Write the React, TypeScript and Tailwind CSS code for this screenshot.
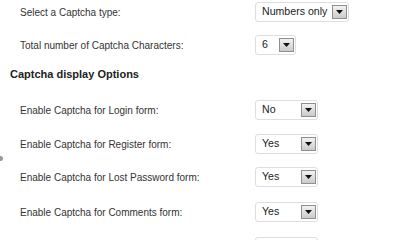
import React from "react";

function Arrow() {
  return (
    <span className="ml-auto mr-[1px] flex h-[14px] w-[15px] shrink-0 items-center justify-center border border-[#8f8f8f] bg-gradient-to-b from-[#f2f2f2] to-[#cbcbcb]">
      <svg width="7" height="4" viewBox="0 0 7 4">
        <path d="M0 0 H7 L3.5 4 Z" fill="#111" />
      </svg>
    </span>
  );
}

function Select({ value, width }: { value: string; width: string }) {
  return (
    <div
      className={`flex h-[20px] ${width} shrink-0 items-center rounded-[3px] border border-[#dedede] bg-white pl-[6px] text-[10.6px] text-[#222]`}
      style={{ fontFamily: '"Liberation Sans", Arial, sans-serif' }}
    >
      <span className="whitespace-nowrap">{value}</span>
      <Arrow />
    </div>
  );
}

function Row({ label, value, width, className = "" }: { label: string; value: string; width: string; className?: string }) {
  return (
    <div className={`flex h-[20px] items-center ${className}`}>
      <div className="w-[255px] shrink-0 pl-[20px] text-[10px] text-[#333]">{label}</div>
      <Select value={value} width={width} />
    </div>
  );
}

export default function App() {
  return (
    <div
      className="relative h-[240px] w-[400px] overflow-hidden bg-white pt-[2px]"
      style={{ fontFamily: '"Liberation Sans", Arial, sans-serif' }}
    >
      <Row label="Select a Captcha type:" value="Numbers only" width="w-[94px]" />
      <Row label="Total number of Captcha Characters:" value="6" width="w-[41px]" className="mt-[13px]" />
      <div className="mt-[11px] flex h-[16px] items-center pl-[10px] text-[11px] font-bold text-[#222]">
        Captcha display Options
      </div>
      <Row label="Enable Captcha for Login form:" value="No" width="w-[63px]" className="mt-[18px]" />
      <Row label="Enable Captcha for Register form:" value="Yes" width="w-[63px]" className="mt-[14px]" />
      <Row label="Enable Captcha for Lost Password form:" value="Yes" width="w-[63px]" className="mt-[13px]" />
      <Row label="Enable Captcha for Comments form:" value="Yes" width="w-[63px]" className="mt-[15px]" />
      <Row label="" value="" width="w-[63px]" className="mt-[15px]" />
      <span className="absolute left-0 top-[156px] h-[5px] w-[3px] rounded-r-full bg-[#9a9a9a]" />
    </div>
  );
}
